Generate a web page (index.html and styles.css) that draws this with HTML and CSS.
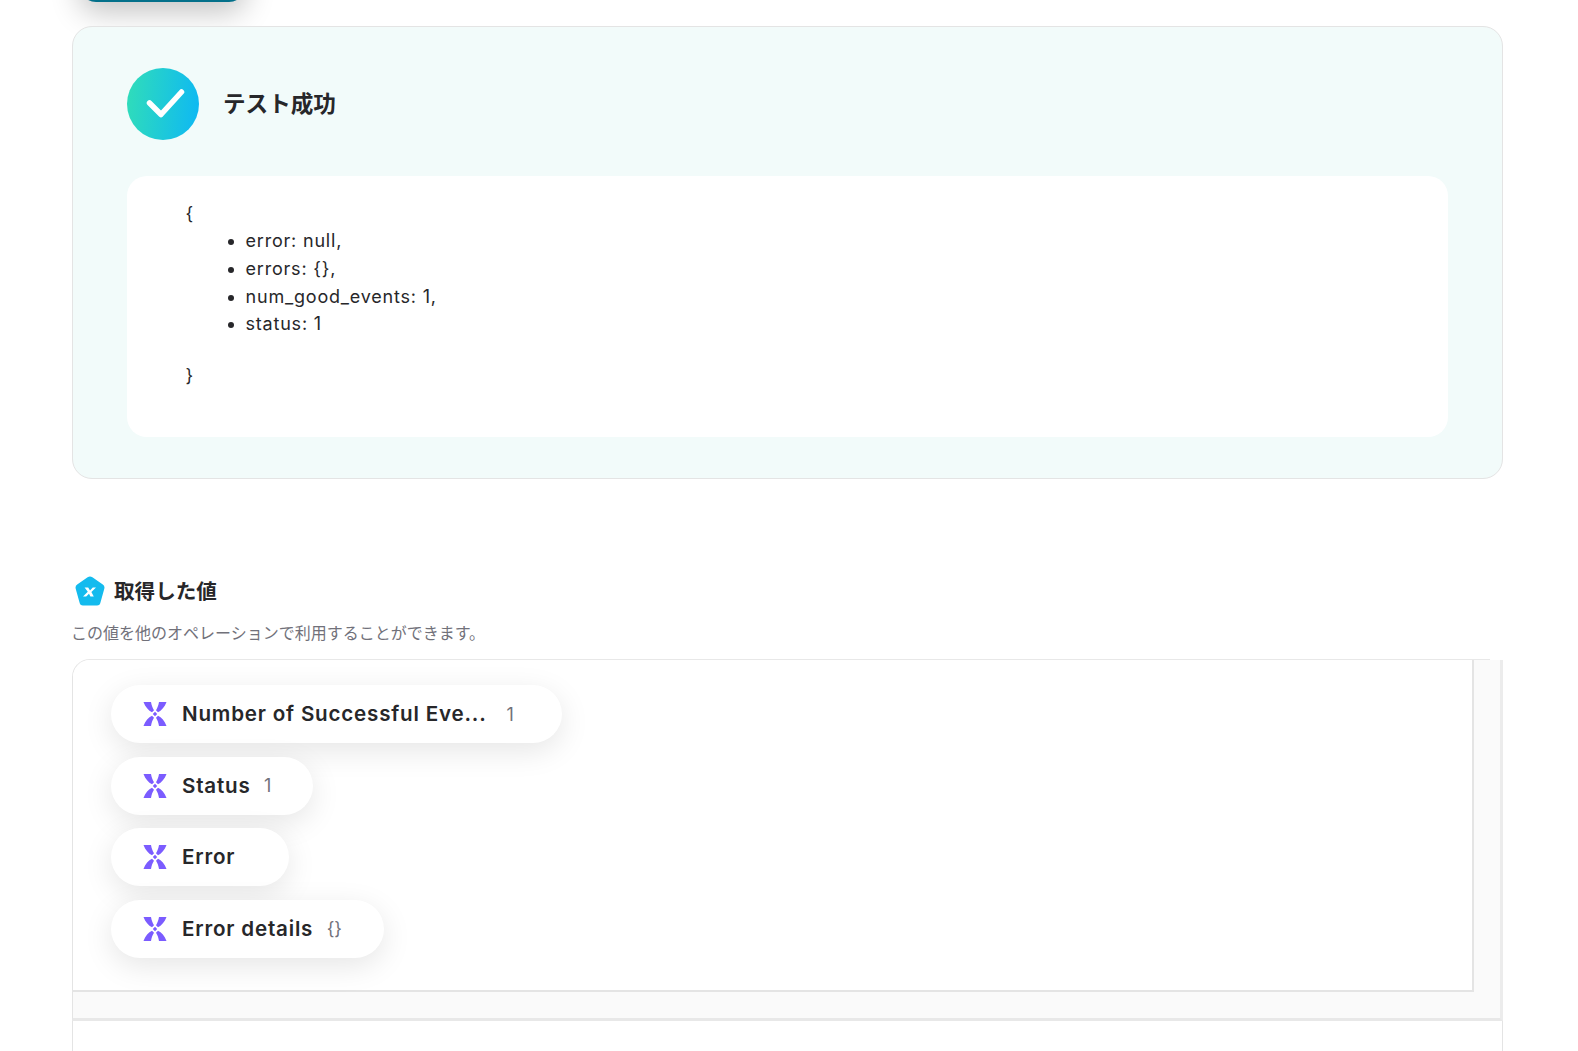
FILE: index.html
```html
<!DOCTYPE html>
<html lang="ja">
<head>
<meta charset="utf-8">
<title>テスト成功</title>
<link rel="stylesheet" href="styles.css">
</head>
<body>
<main class="page">
  <div class="top-button"></div>
  <section class="result-card">
    <header class="result-head">
      <svg class="check" viewBox="0 0 72 72" aria-hidden="true">
        <defs><linearGradient id="grad" x1="0" y1="0.45" x2="1" y2="0.55"><stop offset="0" stop-color="#2fdcbb"/><stop offset="1" stop-color="#0fb9f2"/></linearGradient></defs>
        <circle cx="36" cy="36" r="36" fill="url(#grad)"/>
        <path d="M22.5 35 L34 46.5 L54.5 24" fill="none" stroke="#fff" stroke-width="5.5" stroke-linecap="round" stroke-linejoin="round"/>
      </svg>
      <h2 class="result-title">テスト成功</h2>
    </header>
    <div class="result-body">
      <p class="brace">{</p>
      <ul class="json-list">
        <li>error: null,</li>
        <li>errors: {},</li>
        <li>num_good_events: 1,</li>
        <li>status: 1</li>
      </ul>
      <p class="brace">}</p>
    </div>
  </section>

  <section class="values">
    <h3 class="values-title">
      <svg class="penta" viewBox="0 0 30 30" aria-hidden="true">
        <path d="M12.6 1.2 Q15 -0.4 17.4 1.2 L27.8 8.6 Q30 10.2 29.3 12.8 L25.6 26 Q25 29.5 22 29.5 L8 29.5 Q5 29.5 4.4 26 L0.7 12.8 Q0 10.2 2.2 8.6 Z" fill="#14bbee"/>
        <path d="M9.6 11.6 H13.2 L15 14.4 L17.8 11.6 H21 L16.4 16 L18.8 20.4 H15.4 L14 17.8 L11.2 20.4 H8 L12.8 15.8 Z" fill="#fff"/>
      </svg>
      <span class="values-label">取得した値</span>
    </h3>
    <p class="values-desc">この値を他のオペレーションで利用することができます。</p>
    <div class="value-frame">
      <div class="value-scroll">
        <div class="pill pill-long">
          <svg class="x-icon" viewBox="0 0 24 24" aria-hidden="true"><use href="#xmark"/></svg>
          <span class="pill-name">Number of Successful Eve...</span><span class="pill-val">1</span>
        </div>
        <div class="pill">
          <svg class="x-icon" viewBox="0 0 24 24" aria-hidden="true"><use href="#xmark"/></svg>
          <span class="pill-name">Status</span><span class="pill-val">1</span>
        </div>
        <div class="pill pill-error">
          <svg class="x-icon" viewBox="0 0 24 24" aria-hidden="true"><use href="#xmark"/></svg>
          <span class="pill-name">Error</span>
        </div>
        <div class="pill">
          <svg class="x-icon" viewBox="0 0 24 24" aria-hidden="true"><use href="#xmark"/></svg>
          <span class="pill-name">Error details</span><span class="pill-val">{}</span>
        </div>
      </div>
    </div>
    <div class="next-block"></div>
  </section>
</main>
<svg class="defs" aria-hidden="true">
  <defs>
    <g id="xmark" fill="#7b5cff">
      <path d="M0.5 0H8C8.6 3.5 9.6 6 11 8.2L9 10.2C5.6 8.6 2.2 5 0.5 0Z"/>
      <path d="M23.5 0H16C15.4 3.5 14.4 6 13 8.2L15 10.2C18.4 8.6 21.8 5 23.5 0Z"/>
      <path d="M0.5 24H8C8.6 20.5 9.6 18 11 15.8L9 13.8C5.6 15.4 2.2 19 0.5 24Z"/>
      <path d="M23.5 24H16C15.4 20.5 14.4 18 13 15.8L15 13.8C18.4 15.4 21.8 19 23.5 24Z"/>
      <path d="M12 9.8L14.2 12L12 14.2L9.8 12Z"/>
    </g>
  </defs>
</svg>
</body>
</html>
```
FILE: styles.css
```css
* { box-sizing: border-box; }
html, body { margin: 0; padding: 0; background: #fff; }
body {
  height: 1051px;
  overflow: hidden;
  font-family: Inter, "Noto Sans CJK JP", sans-serif;
  color: #27272a;
}
.defs { width: 0; height: 0; display: block; }
.page { padding: 0 75px 0 72px; }
.top-button {
  width: 165px;
  height: 48px;
  margin: -46px 0 0 8px;
  background: #03708a;
  border-radius: 0 0 16px 16px;
  box-shadow: 0 10px 30px rgba(0, 0, 0, 0.24);
}
.result-card {
  margin-top: 24px;
  height: 453px;
  padding: 41px 54px;
  background: #f2fbfa;
  border: 1px solid #e4e4e4;
  border-radius: 20px;
}
.result-head { display: flex; align-items: center; gap: 24px; }
.check { width: 72px; height: 72px; display: block; flex: none; }
.result-title { margin: 0; font-size: 22.6px; font-weight: 600; line-height: 32px; color: #27272a; }
.result-body {
  margin-top: 36px;
  height: 261px;
  padding: 23.5px 58.5px 0;
  background: #fff;
  border-radius: 20px;
  font-size: 18px;
  line-height: 27.7px;
  letter-spacing: 0.8px;
}
.brace { margin: 0; }
.json-list { margin: 0 0 24px; padding: 0 0 0 60px; }
.values { margin-top: 97px; }
.values-title {
  display: flex;
  align-items: center;
  gap: 9px;
  margin: 0 0 0 3px;
  height: 30px;
  font-size: 20.6px;
  font-weight: 700;
  line-height: 30px;
}
.values-label { padding-top: 2px; }
.penta { width: 30px; height: 30px; flex: none; }
.values-desc {
  margin: 15px 0 0 -1px;
  font-size: 16px;
  line-height: 24px;
  color: #71717a;
}
.value-frame {
  position: relative;
  margin-top: 14px;
  height: 362px;
  padding-right: 26px;
  padding-bottom: 26px;
  background: #fafafa;
  border-left: 1px solid #e4e4e4;
  border-top: 1px solid #e8e8e8;
  border-right: 3px solid #ececec;
  border-bottom: 3px solid #e8e8e8;
  border-top-left-radius: 18px;
}
.value-frame::after {
  content: "";
  position: absolute;
  top: -1px;
  right: -3px;
  width: 13px;
  height: 1px;
  background: #fff;
}
.value-scroll {
  height: 100%;
  padding: 25px 37.5px 0;
  display: flex;
  flex-direction: column;
  align-items: flex-start;
  gap: 13.6px;
  background: #fff;
  border-right: 2px solid #e4e4e4;
  border-bottom: 2px solid #e4e4e4;
  border-top-left-radius: 17px;
}
.pill {
  display: flex;
  align-items: center;
  height: 58px;
  padding: 0 42px 0 32px;
  background: #fff;
  border-radius: 29px;
  box-shadow: 0 8px 30px rgba(0, 0, 0, 0.1);
}
.pill-long { width: 451px; }
.pill-error { width: 178px; }
.x-icon { width: 24px; height: 24px; flex: none; margin-right: 15.5px; }
.pill-name { padding-bottom: 0.5px; font-size: 20.6px; font-weight: 600; letter-spacing: 0.8px; color: #27272a; white-space: nowrap; }
.pill-val { margin-left: 13.5px; font-size: 18px; color: #71717a; white-space: nowrap; }
.pill-long .pill-val { margin-left: 20px; }
.next-block {
  height: 60px;
  border-left: 1px solid #e4e4e4;
  border-right: 1px solid #e4e4e4;
}
```
